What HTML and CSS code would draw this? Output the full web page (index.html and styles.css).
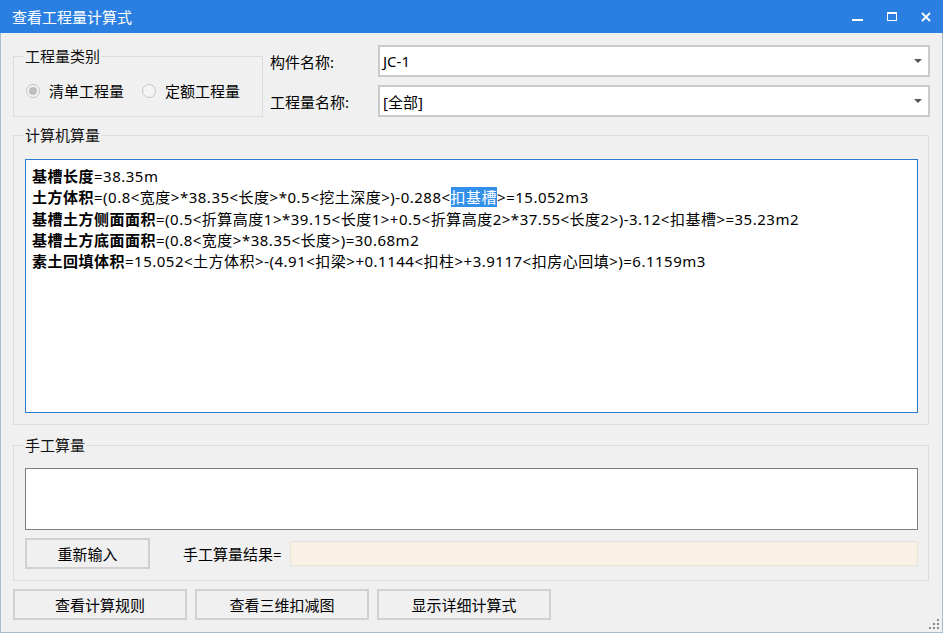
FILE: index.html
```html
<!DOCTYPE html>
<html lang="zh-CN">
<head>
  <meta charset="UTF-8" />
  <title>查看工程量计算式</title>
  <link rel="stylesheet" href="styles.css">
</head>
<body>
  <div class="window">
    <div class="titlebar">
      <span class="title">查看工程量计算式</span>
      <div class="controls">
        <span class="ctl ctl-min"></span>
        <span class="ctl ctl-max"></span>
        <svg class="ctl-close" width="10" height="10" viewBox="0 0 10 10">
          <path d="M1 1 L9 9 M9 1 L1 9" stroke="#fff" stroke-width="1.8" fill="none"/>
        </svg>
      </div>
    </div>

    <div class="content">
      <div class="top">
        <fieldset class="group category">
          <legend>工程量类别</legend>
          <div class="radios">
            <label class="radio"><span class="dot checked"></span>清单工程量</label>
            <label class="radio"><span class="dot"></span>定额工程量</label>
          </div>
        </fieldset>
        <div class="fields">
          <span class="field-label">构件名称:</span>
          <div class="combo">JC-1<span class="arrow"></span></div>
          <span class="field-label">工程量名称:</span>
          <div class="combo">[全部]<span class="arrow"></span></div>
        </div>
      </div>

      <fieldset class="group auto">
        <legend>计算机算量</legend>
        <div class="formula-box">
          <div><b>基槽长度</b>=38.35m</div>
          <div><b>土方体积</b>=(0.8&lt;宽度&gt;*38.35&lt;长度&gt;*0.5&lt;挖土深度&gt;)-0.288&lt;<span class="sel">扣基槽</span>&gt;=15.052m3</div>
          <div><b>基槽土方侧面面积</b>=(0.5&lt;折算高度1&gt;*39.15&lt;长度1&gt;+0.5&lt;折算高度2&gt;*37.55&lt;长度2&gt;)-3.12&lt;扣基槽&gt;=35.23m2</div>
          <div><b>基槽土方底面面积</b>=(0.8&lt;宽度&gt;*38.35&lt;长度&gt;)=30.68m2</div>
          <div><b>素土回填体积</b>=15.052&lt;土方体积&gt;-(4.91&lt;扣梁&gt;+0.1144&lt;扣柱&gt;+3.9117&lt;扣房心回填&gt;)=6.1159m3</div>
        </div>
      </fieldset>

      <fieldset class="group manual">
        <legend>手工算量</legend>
        <div class="manual-input"></div>
        <div class="manual-row">
          <button class="btn btn-reset">重新输入</button>
          <span class="result-label">手工算量结果=</span>
          <div class="result"></div>
        </div>
      </fieldset>

      <div class="actions">
        <button class="btn btn-action">查看计算规则</button>
        <button class="btn btn-action">查看三维扣减图</button>
        <button class="btn btn-action">显示详细计算式</button>
      </div>
    </div>

    <svg class="grip" width="10" height="10" viewBox="0 0 10 10">
      <rect x="8" y="0" width="2" height="2" fill="#8a8a8a"/>
      <rect x="4" y="4" width="2" height="2" fill="#8a8a8a"/>
      <rect x="8" y="4" width="2" height="2" fill="#8a8a8a"/>
      <rect x="0" y="8" width="2" height="2" fill="#8a8a8a"/>
      <rect x="4" y="8" width="2" height="2" fill="#8a8a8a"/>
      <rect x="8" y="8" width="2" height="2" fill="#8a8a8a"/>
    </svg>
  </div>
</body>
</html>
```

FILE: styles.css
```css
* {
  box-sizing: border-box;
}
body {
  margin: 0;
  font-family: "Noto Sans", "Noto Sans CJK SC", sans-serif;
  font-size: 15px;
  color: #000;
  background: #f0f0f0;
}
.window {
  position: relative;
  width: 943px;
  height: 633px;
  background: #f0f0f0;
  border: 1px solid #a9bcd3;
  border-top: none;
}
.titlebar {
  height: 33px;
  margin: 0 -1px;
  background: #2b7fe0;
  color: #fff;
  display: flex;
  align-items: center;
  justify-content: space-between;
  padding: 0 12px;
}
.title {
  font-size: 15px;
}
.controls {
  display: flex;
  align-items: center;
  gap: 24px;
}
.ctl-min {
  width: 11px;
  height: 2px;
  background: #fff;
  margin-top: 7px;
}
.ctl-max {
  width: 10px;
  height: 9px;
  border: 1px solid #fff;
  border-top-width: 2px;
}
.ctl-close {
  display: block;
}
.content {
  padding: 12px 12px 0 12px;
}
.top {
  display: flex;
  height: 72px;
}
.group {
  margin: 0;
  border: 1px solid #dcdcdc;
  padding: 0;
  min-width: 0;
}
.group legend {
  margin-left: 10px;
  padding: 0 1px;
  line-height: 18px;
  color: #111;
}
.category {
  width: 250px;
  height: 70px;
  margin-top: 2px;
  padding-top: 17px;
}
.radios {
  display: flex;
  gap: 18px;
  margin-left: 12px;
}
.radio {
  display: flex;
  align-items: center;
  gap: 9px;
  line-height: 18px;
}
.dot {
  width: 14px;
  height: 14px;
  border: 1px solid #c4c4c4;
  border-radius: 50%;
  background: #f4f4f4;
  display: flex;
  align-items: center;
  justify-content: center;
}
.dot.checked::after {
  content: "";
  width: 8px;
  height: 8px;
  border-radius: 50%;
  background: #bdbdbd;
}
.fields {
  margin-left: 7px;
  flex: 1;
  display: grid;
  grid-template-columns: 108px 1fr;
  grid-template-rows: 32px 32px;
  row-gap: 8px;
  align-items: center;
}
.combo {
  height: 32px;
  background: #fff;
  border: 2px solid #cacaca;
  padding-left: 3px;
  display: flex;
  align-items: center;
  justify-content: space-between;
  padding-right: 6px;
}
.arrow {
  width: 0;
  height: 0;
  border-left: 4px solid transparent;
  border-right: 4px solid transparent;
  border-top: 4px solid #555;
}
.auto {
  margin-top: 9px;
  margin-right: 1px;
  height: 299px;
  padding: 15px 10px 10px 0;
}
.formula-box {
  margin-left: 11px;
  height: 254px;
  background: #fff;
  border: 1px solid #2b7bd0;
  padding: 6px 6px;
  line-height: 21.3px;
  letter-spacing: 0.5px;
  white-space: nowrap;
  overflow: hidden;
}
.sel {
  background: #3390ea;
  color: #fff;
}
.manual {
  margin-top: 11px;
  margin-right: 1px;
  height: 145px;
  padding: 14px 10px 0 0;
}
.manual-input {
  margin-left: 11px;
  height: 62px;
  background: #fff;
  border: 1px solid #7f7f7f;
}
.manual-row {
  margin: 8px 0 0 11px;
  display: flex;
  align-items: center;
}
.btn {
  font-family: inherit;
  font-size: 15px;
  color: #000;
  background: #f0f0f0;
  border: 2px solid #d0d0d0;
  height: 31px;
  padding: 0;
}
.btn-reset {
  width: 125px;
}
.result-label {
  margin-left: 33px;
  width: 107px;
}
.result {
  flex: 1;
  height: 25px;
  background: #faf0e6;
  border: 1px solid #e6e2de;
}
.actions {
  margin-top: 8px;
  display: flex;
  gap: 8px;
}
.btn-action {
  width: 174px;
}
.grip {
  position: absolute;
  right: 3px;
  bottom: 3px;
}
```
